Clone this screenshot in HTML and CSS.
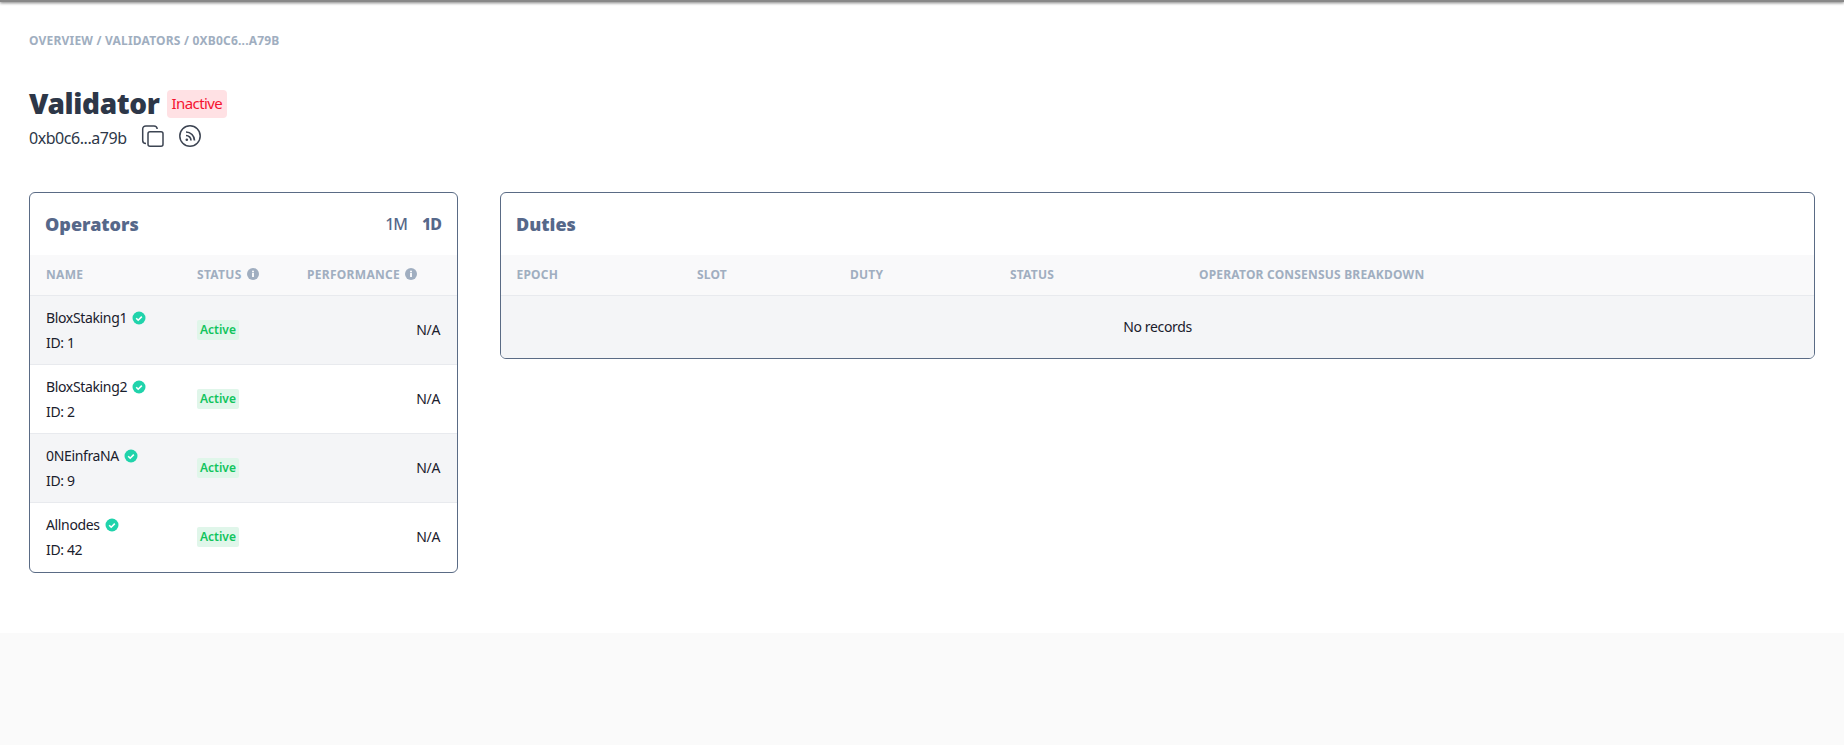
FILE: index.html
```html
<!DOCTYPE html>
<html lang="en">
<head>
    <meta charset="UTF-8">
    <title>Validator</title>
    <link rel="stylesheet" href="styles.css">
</head>
<body>
    <div class="top-shadow"></div>
    <main class="page">
        <div class="breadcrumb">OVERVIEW / VALIDATORS / 0XB0C6...A79B</div>

        <div class="title-row">
            <h1>Validator</h1>
            <span class="badge-inactive">Inactive</span>
        </div>
        <div class="address-row">
            <span class="address">0xb0c6...a79b</span>
            <svg class="icon-copy" width="24" height="24" viewBox="0 0 24 24" fill="none" stroke="#3c4452" stroke-width="1.5">
                <rect x="8" y="7.7" width="15" height="14.6" rx="2"/>
                <path d="M6 19.5c-2 0-3.3-1.2-3.3-3V5c0-1.8 1.3-3 3.200-3h8.100c1.800 0 3 1.200 3.200 3"/>
            </svg>
            <svg class="icon-feed" width="24" height="24" viewBox="0 0 24 24" fill="none" stroke="#3c4452" stroke-width="1.5">
                <circle cx="12" cy="12" r="10.2"/>
                <path d="M8 11.500a5 5 0 0 1 5 5" stroke-width="1.700"/>
                <path d="M8 8a8.500 8.500 0 0 1 8.500 8.500" stroke-width="1.700"/>
                <circle cx="8.800" cy="15.700" r="1.300" fill="#3c4452" stroke="none"/>
            </svg>
        </div>

        <div class="cards">
            <section class="card card-operators">
                <div class="card-head">
                    <h2>Operators</h2>
                    <div class="range">
                        <span>1M</span>
                        <span class="range-on">1D</span>
                    </div>
                </div>
                <div class="op-row op-labels">
                    <div>NAME</div>
                    <div class="with-info">STATUS <svg class="info" viewBox="0 0 12 12"><circle cx="6" cy="6" r="6" fill="#a0aec0"/><rect x="5.100" y="5" width="1.800" height="4" fill="#fff"/><rect x="5.100" y="2.700" width="1.800" height="1.600" fill="#fff"/></svg></div>
                    <div class="with-info">PERFORMANCE <svg class="info" viewBox="0 0 12 12"><circle cx="6" cy="6" r="6" fill="#a0aec0"/><rect x="5.100" y="5" width="1.800" height="4" fill="#fff"/><rect x="5.100" y="2.700" width="1.800" height="1.600" fill="#fff"/></svg></div>
                </div>

                <div class="op-row shaded">
                    <div class="op-cell">
                        <div class="op-name">BloxStaking1 <svg class="check" viewBox="0 0 14 14"><circle cx="7" cy="7" r="6.500" fill="#20d3ab"/><path d="M4.200 7.200l2 2 3.600-3.600" fill="none" stroke="#fff" stroke-width="1.600"/></svg></div>
                        <div class="op-id">ID: 1</div>
                    </div>
                    <div><span class="badge-active">Active</span></div>
                    <div class="na">N/A</div>
                </div>
                <div class="op-row">
                    <div class="op-cell">
                        <div class="op-name">BloxStaking2 <svg class="check" viewBox="0 0 14 14"><circle cx="7" cy="7" r="6.500" fill="#20d3ab"/><path d="M4.200 7.200l2 2 3.600-3.600" fill="none" stroke="#fff" stroke-width="1.600"/></svg></div>
                        <div class="op-id">ID: 2</div>
                    </div>
                    <div><span class="badge-active">Active</span></div>
                    <div class="na">N/A</div>
                </div>
                <div class="op-row shaded">
                    <div class="op-cell">
                        <div class="op-name">0NEinfraNA <svg class="check" viewBox="0 0 14 14"><circle cx="7" cy="7" r="6.500" fill="#20d3ab"/><path d="M4.200 7.200l2 2 3.600-3.600" fill="none" stroke="#fff" stroke-width="1.600"/></svg></div>
                        <div class="op-id">ID: 9</div>
                    </div>
                    <div><span class="badge-active">Active</span></div>
                    <div class="na">N/A</div>
                </div>
                <div class="op-row last">
                    <div class="op-cell">
                        <div class="op-name">Allnodes <svg class="check" viewBox="0 0 14 14"><circle cx="7" cy="7" r="6.500" fill="#20d3ab"/><path d="M4.200 7.200l2 2 3.600-3.600" fill="none" stroke="#fff" stroke-width="1.600"/></svg></div>
                        <div class="op-id">ID: 42</div>
                    </div>
                    <div><span class="badge-active">Active</span></div>
                    <div class="na">N/A</div>
                </div>
            </section>

            <section class="card card-duties">
                <div class="card-head">
                    <h2>Duties</h2>
                </div>
                <div class="duty-labels">
                    <div>EPOCH</div>
                    <div>SLOT</div>
                    <div>DUTY</div>
                    <div>STATUS</div>
                    <div>OPERATOR CONSENSUS BREAKDOWN</div>
                </div>
                <div class="no-records">No records</div>
            </section>
        </div>
    </main>
</body>
</html>
```

FILE: styles.css
```css
html, body { margin: 0; padding: 0; }
body { background: #fafafa; font-family: "Noto Sans", sans-serif; color: #1a202c; height: 745px; overflow: hidden; position: relative; }
.top-shadow { position: absolute; top: 0; left: 0; right: 0; height: 2px; background: #888; box-shadow: 0 1px 3px rgba(0,0,0,0.6); }
.page { background: #fff; height: 633px; box-sizing: border-box; padding: 33px 29px 0; }

.breadcrumb { font-size: 12px; line-height: 16px; font-weight: 700; letter-spacing: 0.2px; color: #a0aec0; }

.title-row { display: flex; align-items: center; gap: 7px; margin-top: 38px; height: 32px; }
h1 { margin: 0; font-size: 28px; line-height: 32px; font-weight: 900; letter-spacing: -0.35px; color: #2d3748; }
.badge-inactive { margin-top: 2px; background: #ffe1e4; color: #f5132f; font-size: 15px; letter-spacing: -0.6px; line-height: 26px; padding: 0 5px 2px; border-radius: 4px; }

.address-row { display: flex; align-items: center; height: 24px; margin-top: 5px; font-size: 16px; letter-spacing: -0.45px; color: #2d3748; }
.address { padding-top: 4px; }
.icon-copy { margin-left: 13px; }
.icon-feed { margin-left: 14px; }

.cards { display: flex; align-items: flex-start; gap: 42px; margin-top: 44px; }
.card { border: 1px solid #5a6b85; border-radius: 6px; overflow: hidden; box-sizing: border-box; }
.card-operators { width: 429px; }
.card-duties { flex: 1; }

.card-head { display: flex; justify-content: space-between; align-items: center; height: 62px; padding: 0 16px 0 15px; }
h2 { margin: 0; font-size: 18px; font-weight: 900; color: #56688a; }
.range { display: flex; gap: 15px; font-size: 16px; font-weight: 500; letter-spacing: -1px; color: #56688a; }
.range-on { font-weight: 800; }

.op-row { display: grid; grid-template-columns: 151px 110px 1fr; align-items: center; height: 69px; box-sizing: border-box; padding: 0 17px 2px 16px; border-bottom: 1px solid #e8eaee; font-size: 14px; letter-spacing: -0.35px; }
.op-row.shaded { background: #f4f5f7; }
.op-row.last { border-bottom: none; }
.op-labels { height: 41px; background: #f9f9fa; font-size: 12px; font-weight: 700; letter-spacing: 0.3px; color: #a0aec0; }
.with-info { display: flex; align-items: center; gap: 5px; }
.info { width: 12px; height: 12px; }

.op-cell { align-self: start; padding-top: 10px; }
.op-name { display: flex; align-items: center; gap: 5px; line-height: 24px; }
.op-id { line-height: 26px; }
.check { width: 14px; height: 14px; }
.badge-active { display: inline-block; background: #e0f6ea; color: #10c45c; font-size: 12px; font-weight: 600; letter-spacing: 0; line-height: 20px; padding: 0 3px; border-radius: 2px; }
.na { text-align: right; }

.duty-labels { display: grid; grid-template-columns: 180.5px 153px 160px 189px 1fr; align-items: center; height: 41px; box-sizing: border-box; padding: 0 15.5px 2px; background: #f9f9fa; border-bottom: 1px solid #e8eaee; font-size: 12px; font-weight: 700; letter-spacing: 0.2px; color: #a0aec0; }
.no-records { height: 62px; box-sizing: border-box; padding-bottom: 2px; background: #f4f5f7; display: flex; align-items: center; justify-content: center; font-size: 14px; letter-spacing: -0.35px; }
```
